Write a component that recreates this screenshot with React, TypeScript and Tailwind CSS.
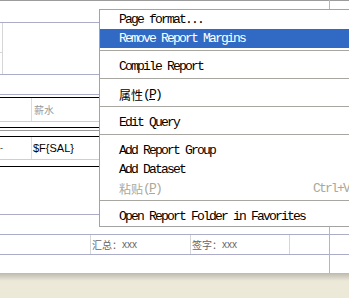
import React from 'react';

type MenuItem =
  | { kind: 'sep' }
  | { kind: 'item'; label: React.ReactNode; hot?: boolean; disabled?: boolean; shortcut?: string };

const mono = "font-['Liberation_Mono',monospace] text-[13px] tracking-[-1.8px]";
const cjk = "font-['Noto_Sans_CJK_SC',sans-serif] tracking-normal";

const Mnemonic = ({ text }: { text: string }) => (
  <span className="flex items-center">
    <span className={`${cjk} text-[12px] leading-none`}>{text}</span>
    <span>
      (<span className="underline underline-offset-1">P</span>)
    </span>
  </span>
);

const menuItems: MenuItem[] = [
  { kind: 'item', label: 'Page format...' },
  { kind: 'item', label: 'Remove Report Margins', hot: true },
  { kind: 'sep' },
  { kind: 'item', label: 'Compile Report' },
  { kind: 'sep' },
  { kind: 'item', label: <Mnemonic text="属性" /> },
  { kind: 'sep' },
  { kind: 'item', label: 'Edit Query' },
  { kind: 'sep' },
  { kind: 'item', label: 'Add Report Group' },
  { kind: 'item', label: 'Add Dataset' },
  { kind: 'item', label: <Mnemonic text="粘贴" />, disabled: true, shortcut: 'Ctrl+V' },
  { kind: 'sep' },
  { kind: 'item', label: 'Open Report Folder in Favorites' },
];

const ContextMenu = () => (
  <div className="absolute left-[99px] top-[9px] w-[262px] border border-[#a3a3a3] bg-white">
    {menuItems.map((m, i) =>
      m.kind === 'sep' ? (
        <div key={i} className="h-[9px] pt-[2px]">
          <div className="h-px bg-[#a7a6a0]" />
        </div>
      ) : (
        <div
          key={i}
          className={`flex h-[19px] items-center pl-[19px] pt-px ${mono} ${
            m.hot ? 'bg-[#316ac5] text-white' : m.disabled ? 'text-[#aca899]' : 'text-black'
          }`}
        >
          <span className="w-[194px] shrink-0">{m.label}</span>
          {m.shortcut && <span>{m.shortcut}</span>}
        </div>
      )
    )}
  </div>
);

const App = () => {
  return (
    <div className="relative h-[298px] w-[349px] overflow-hidden bg-[#ece9d8] font-['Liberation_Sans',sans-serif]">
      <div className="flex flex-col bg-white">
        <div className="h-px bg-[#9c9c9c]" />
        <div className="h-[21px]" />
        <div className="h-px bg-[#aaacc8]" />
        <div className="flex h-[51px]">
          <div className="flex w-[3px] flex-col border-r border-[#d6d6d6]">
            <div className="h-[30px] border-b border-[#d6d6d6]" />
          </div>
        </div>
        <div className="h-px bg-[#aaacc8]" />
        <div className="h-[19px]" />
        <div className="h-px bg-[#aaacc8]" />
        <div className="h-[2px]" />
        <div className="h-px bg-black" />
        <div className="flex h-[23px] items-center">
          <div className="h-full w-[32px] border-r border-[#dcdcdc]" />
          <span className={`${cjk} pl-[2px] text-[10px] text-[#9a9a9a]`}>薪水</span>
        </div>
        <div className="h-px bg-[#cfcfcf]" />
        <div className="h-[5px]" />
        <div className="h-px bg-black" />
        <div className="h-[2px]" />
        <div className="h-px bg-[#9a9a9a]" />
        <div className="h-[5px]" />
        <div className="h-px bg-black" />
        <div className="flex h-[22px] items-center">
          <div className="flex h-full w-[32px] items-center border-r border-[#dcdcdc] text-[9px] leading-none text-[#333]">
            -
          </div>
          <span className="pl-px text-[11px] text-black">$F{'{'}SAL{'}'}</span>
        </div>
        <div className="h-px bg-[#cfcfcf]" />
        <div className="h-[6px]" />
        <div className="h-px bg-black" />
        <div className="h-[47px]" />
        <div className="h-px bg-[#aaacc8]" />
        <div className="h-[19px]" />
        <div className="h-px bg-[#aaacc8]" />
        <div className="flex h-[19px] text-[10px] text-[#666]">
          <div className="w-[90px]" />
          <div className="flex w-[100px] items-center border-l border-[#d6d6d6] pl-px">
            <span className={cjk}>汇总：</span>
            <span>xxx</span>
          </div>
          <div className="flex w-[100px] items-center border-x border-[#d6d6d6] pl-px">
            <span className={cjk}>签字：</span>
            <span>xxx</span>
          </div>
        </div>
        <div className="h-px bg-[#aaacc8]" />
        <div className="h-[18px]" />
      </div>
      <div className="h-[8px] bg-gradient-to-b from-[#bcb9ae] to-[#ece9d8]" />
      <div className="absolute left-[329px] top-0 h-[273px] w-px bg-[#b4b4c8]" />
      <ContextMenu />
    </div>
  );
};

export default App;
